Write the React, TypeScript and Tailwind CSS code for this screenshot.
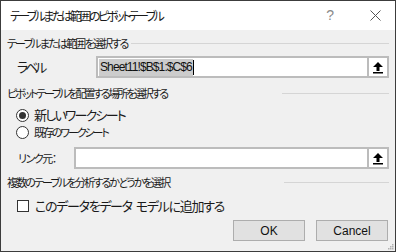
import React from "react";

const jp = "font-['Noto_Sans_CJK_JP','Noto_Sans',sans-serif] [font-feature-settings:'palt']";

function PickButton() {
  return (
    <div className="w-[22px] h-[22px] shrink-0 border-2 border-[#bcbcbc] bg-white flex items-center justify-center">
      <svg width="12" height="13" viewBox="0 0 12 13">
        <path d="M6 1 L11 6 L7.5 6 L7.5 10 L4.5 10 L4.5 6 L1 6 Z" fill="#000" />
        <rect x="1" y="11" width="10" height="1.5" fill="#000" />
      </svg>
    </div>
  );
}

function SectionHeader({ text, lineFrom, track }: { text: string; lineFrom: number; track: string }) {
  return (
    <div className="relative h-[14px] flex items-center">
      <span className={`${jp} text-[11px] leading-[14px] ${track} text-[#1a1a1a]`}>{text}</span>
      <div className="absolute h-px bg-[#d5d5d5] right-[0px]" style={{ left: lineFrom }} />
    </div>
  );
}

export default function App() {
  return (
    <div className="w-[396px] h-[252px] border border-[#3c3c3c] bg-[#f0f0f0] flex flex-col overflow-hidden">
      <div className="h-[29px] bg-white flex items-center pl-[9px] pr-[14px] shrink-0">
        <span className={`${jp} text-[12px] tracking-[-2.6px] text-[#1a1a1a] flex-1`}>テーブルまたは範囲のピボットテーブル</span>
        <span className="font-['Liberation_Sans',sans-serif] text-[14px] text-[#8a8a8a] font-light mr-[36px]">?</span>
        <svg width="11" height="11" viewBox="0 0 11 11">
          <path d="M0.5 0.5 L10.5 10.5 M10.5 0.5 L0.5 10.5" stroke="#555" strokeWidth="1" />
        </svg>
      </div>

      <div className="flex-1 flex flex-col pl-[6px] pr-[6px] pt-[6px] relative">
        <SectionHeader text="テーブルまたは範囲を選択する" lineFrom={124} track="tracking-[-1.8px]" />

        <div className="flex items-center mt-[6px] h-[22px]">
          <span className={`${jp} text-[13px] tracking-[-3.2px] text-[#1a1a1a] w-[89px] pl-[10px]`}>ラベル</span>
          <div className="flex-1 h-[22px] border-2 border-r-0 border-[#bcbcbc] bg-white flex items-center pl-[1px]">
            <span className="font-['Liberation_Sans',sans-serif] text-[12px] leading-[17px] bg-[#cccccc] text-[#111] px-[1px] tracking-[-0.9px]">Sheet11!$B$1:$C$6</span>
            <span className="w-px h-[15px] bg-black" />
          </div>
          <PickButton />
        </div>

        <div className="mt-[8px]">
          <SectionHeader text="ピボットテーブルを配置する場所を選択する" lineFrom={275} track="tracking-[-2.2px]" />
        </div>

        <div className="flex items-center mt-[7px] h-[16px] pl-[9px]">
          <div className="w-[13px] h-[13px] rounded-full border border-[#333] bg-white flex items-center justify-center">
            <div className="w-[7px] h-[7px] rounded-full bg-[#333]" />
          </div>
          <span className={`${jp} text-[13px] tracking-[-1.8px] text-[#1a1a1a] ml-[5px] leading-[16px]`}>新しいワークシート</span>
        </div>

        <div className="flex items-center mt-[1px] h-[16px] pl-[9px]">
          <div className="w-[13px] h-[13px] rounded-full border border-[#333] bg-white" />
          <span className={`${jp} text-[11px] tracking-[-2.1px] text-[#1a1a1a] ml-[5px] leading-[16px]`}>既存のワークシート</span>
        </div>

        <div className="flex items-center mt-[7px] h-[22px]">
          <span className={`${jp} text-[11px] tracking-[-1.5px] text-[#1a1a1a] w-[67px] pl-[11px]`}>リンク元：</span>
          <div className="flex-1 h-[22px] border-2 border-r-0 border-[#bcbcbc] bg-white" />
          <PickButton />
        </div>

        <div className="mt-[6px]">
          <SectionHeader text="複数のテーブルを分析するかどうかを選択" lineFrom={277} track="tracking-[-1.85px]" />
        </div>

        <div className="flex items-center mt-[9px] h-[16px] pl-[10px]">
          <div className="w-[12px] h-[12px] border border-[#333] bg-white" />
          <span className={`${jp} text-[13px] tracking-[-1.3px] text-[#1a1a1a] ml-[6px] leading-[16px]`}>
            このデータをデータ<span className="ml-[4px]">モデルに追加する</span>
          </span>
        </div>

        <div className="flex justify-end gap-[11px] mt-[6px] pr-[1px]">
          <button className="w-[72px] h-[21px] bg-[#e1e1e1] border border-[#adadad] font-['Liberation_Sans',sans-serif] text-[12px] text-[#111]">OK</button>
          <button className="w-[72px] h-[21px] bg-[#e1e1e1] border border-[#adadad] font-['Liberation_Sans',sans-serif] text-[12px] text-[#111]">Cancel</button>
        </div>

        <svg className="absolute right-[1px] bottom-[1px]" width="7" height="7" viewBox="0 0 7 7">
          <rect x="5" y="1" width="1.5" height="1.5" fill="#b0b0b0" />
          <rect x="3" y="3" width="1.5" height="1.5" fill="#b0b0b0" />
          <rect x="5" y="3" width="1.5" height="1.5" fill="#b0b0b0" />
          <rect x="1" y="5" width="1.5" height="1.5" fill="#b0b0b0" />
          <rect x="3" y="5" width="1.5" height="1.5" fill="#b0b0b0" />
          <rect x="5" y="5" width="1.5" height="1.5" fill="#b0b0b0" />
        </svg>
      </div>
    </div>
  );
}
